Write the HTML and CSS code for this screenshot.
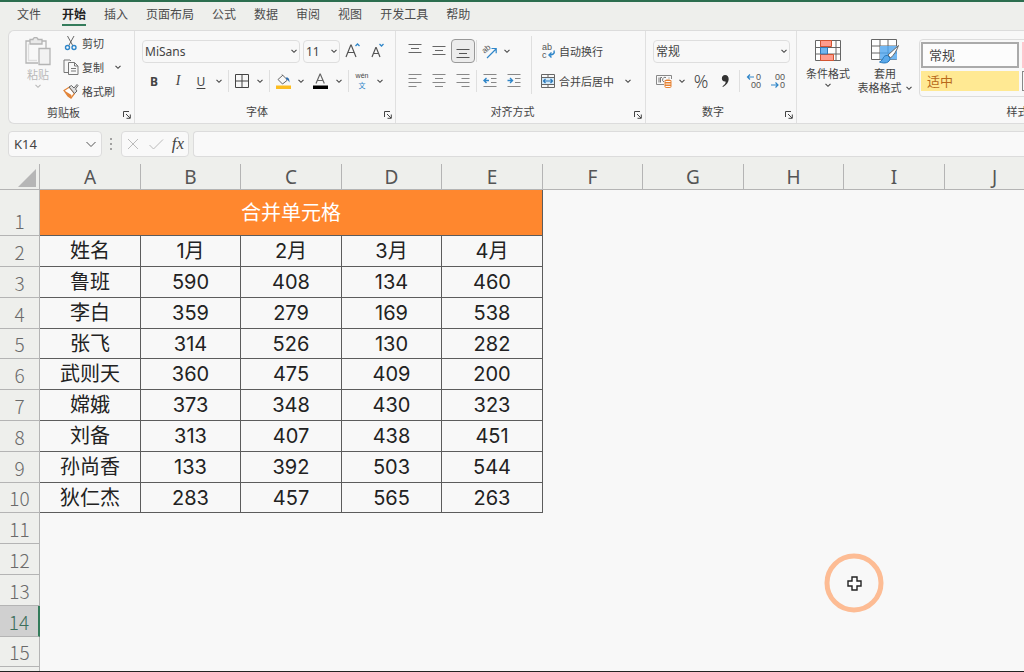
FILE: index.html
```html
<!DOCTYPE html>
<html lang="zh-CN">

<head>
    <meta charset="utf-8">
    <title>合并单元格</title>
    <link rel="stylesheet" href="styles.css">
</head>

<body>
    <svg class="symbols" aria-hidden="true">
        <symbol id="chevron" viewBox="0 0 8 8"><path d="M1.5 2.8 4 5.3 6.5 2.8" fill="none" stroke="currentColor" stroke-width="1.1"/></symbol>
        <symbol id="launcher" viewBox="0 0 8 8"><path d="M.5 6V.5H6M3 3l4 4M7.3 3.5v3.8H3.5" fill="none" stroke="currentColor"/></symbol>
    </svg>
    <nav class="tabs">
        <a href="#" class="file-tab">文件</a>
        <a href="#" class="active-tab">开始</a>
        <a href="#">插入</a>
        <a href="#">页面布局</a>
        <a href="#">公式</a>
        <a href="#">数据</a>
        <a href="#">审阅</a>
        <a href="#">视图</a>
        <a href="#">开发工具</a>
        <a href="#">帮助</a>
    </nav>

    <div class="ribbon">
        <section class="group clipboard">
            <div class="group-body">
                <button type="button" class="paste">
                    <svg width="28" height="29" viewBox="0 0 28 29" fill="none" stroke="#b4b4b4" stroke-width="1.3">
                        <path d="M6 4H2v22h12M18 4h4v7"/>
                        <path d="M6 2.5h3C9-.2 14-.2 14 2.5h4V7H6z" fill="#e9e9e9"/>
                        <path d="M4.500 6.500V23.500H13" stroke="#dedede"/>
                        <path d="M15 11.500h11v16H15z" fill="#f2f2f2"/>
                    </svg>
                    <span>粘贴</span>
                    <svg class="chev"><use href="#chevron"/></svg>
                </button>
                <div class="stack three">
                    <button type="button" class="text-tool">
                        <svg width="16" height="16" viewBox="0 0 16 16" fill="none" stroke="#666">
                            <path d="M4.500 1 10 11M11 1 5.500 11"/>
                            <circle cx="4.500" cy="12.500" r="2" stroke="#2f86c9" stroke-width="1.400"/><circle cx="11" cy="12.500" r="2" stroke="#2f86c9" stroke-width="1.400"/>
                        </svg>
                        剪切
                    </button>
                    <div class="row">
                        <button type="button" class="text-tool">
                            <svg width="16" height="16" viewBox="0 0 16 16" fill="none" stroke="#777">
                                <path d="M5 13.500H1V1h6l1 1M5.500 3.500h6l3.500 3.500v8.500H5.500zM11.500 3.500V7H15M8 9.500h5M8 12h5"/>
                            </svg>
                            复制
                        </button>
                        <button type="button" class="more copy-more" aria-label="复制选项"><svg class="chev"><use href="#chevron"/></svg></button>
                    </div>
                    <button type="button" class="text-tool">
                        <svg width="16" height="16" viewBox="0 0 16 16" fill="none">
                            <path d="M1 7.500 6.500 4l5 6.500L8 15 5 13z" fill="#fff" stroke="#e2853a" stroke-width="1.300"/>
                            <path d="m2 8 6.500 4L8 15l-3-2z" fill="#e2853a"/>
                            <path d="m6 4 2.500-1.500L11 5l3-3.500 1 1L12.500 6 14 8l-2.500 2.500z" fill="#ddd" stroke="#666"/>
                        </svg>
                        格式刷
                    </button>
                </div>
            </div>
            <div class="group-foot"><span>剪贴板</span><button type="button" class="launch" aria-label="剪贴板设置"><svg><use href="#launcher"/></svg></button></div>
        </section>

        <section class="group font-group">
            <div class="group-body">
                <div class="stack">
                    <div class="row">
                        <div class="combo font-name">
                            <select aria-label="字体"><option>MiSans</option></select>
                            <svg class="chev"><use href="#chevron"/></svg>
                        </div>
                        <div class="combo font-size">
                            <select aria-label="字号"><option>11</option></select>
                            <svg class="chev"><use href="#chevron"/></svg>
                        </div>
                        <button type="button" class="tool size-tool" aria-label="增大字号">
                            <svg width="18" height="18" viewBox="0 0 18 18" fill="none" stroke="#555"><path d="m2 15 4.800-12h.4L12 15M3.800 10.500h6.400" stroke-width="1.200"/><path d="m11.500 4 2-2 2 2" stroke="#2f86c9" stroke-width="1.300"/></svg>
                        </button>
                        <button type="button" class="tool size-tool" aria-label="减小字号">
                            <svg width="18" height="18" viewBox="0 0 18 18" fill="none" stroke="#555"><path d="m3 15 3.800-9.500h.4L11 15M4.500 11.500h5" stroke-width="1.200"/><path d="m10.500 2 2 2 2-2" stroke="#2f86c9" stroke-width="1.300"/></svg>
                        </button>
                    </div>
                    <div class="row">
                        <button type="button" class="tool bold">B</button>
                        <button type="button" class="tool italic">I</button>
                        <button type="button" class="tool split underline">U</button>
                        <button type="button" class="more" aria-label="下划线选项"><svg class="chev"><use href="#chevron"/></svg></button>
                        <span class="sep"></span>
                        <button type="button" class="tool split" aria-label="边框">
                            <svg width="16" height="16" viewBox="0 0 16 16" fill="none" stroke="#444"><path d="M1.500 1.500h13v13h-13zM8 1.500v13M1.500 8h13"/></svg>
                        </button>
                        <button type="button" class="more" aria-label="边框选项"><svg class="chev"><use href="#chevron"/></svg></button>
                        <span class="sep"></span>
                        <button type="button" class="tool split" aria-label="填充颜色">
                            <svg width="16" height="16" viewBox="0 0 16 16" fill="none"><path d="M7 1.500 12.500 7l-5 4L3 6.500l5-4.500" stroke="#666"/><path d="M11 4.500c3-.5 3.500 2 3.500 5-1-1-1-3-3.500-3z" fill="#2f6eaf"/><path fill="#fdbd20" d="M1 12.500h15V16H1z"/></svg>
                        </button>
                        <button type="button" class="more" aria-label="填充颜色选项"><svg class="chev"><use href="#chevron"/></svg></button>
                        <button type="button" class="tool" aria-label="字体颜色">
                            <svg width="16" height="16" viewBox="0 0 16 16" fill="none"><path d="m4 10.500 4-9.500h.3l4 9.500M5.500 7.500h5.300" stroke="#666" stroke-width="1.200"/><path fill="#000" d="M1 12.500h15V16H1z"/></svg>
                        </button>
                        <button type="button" class="more" aria-label="字体颜色选项"><svg class="chev"><use href="#chevron"/></svg></button>
                        <span class="sep"></span>
                        <button type="button" class="tool split phonetic"><span>wén</span><span class="phonetic-char">文</span></button>
                        <button type="button" class="more" aria-label="拼音选项"><svg class="chev"><use href="#chevron"/></svg></button>
                    </div>
                </div>
            </div>
            <div class="group-foot"><span>字体</span><button type="button" class="launch" aria-label="字体设置"><svg><use href="#launcher"/></svg></button></div>
        </section>

        <section class="group align-group">
            <div class="group-body">
                <div class="stack">
                    <div class="row">
                        <button type="button" class="tool" aria-label="顶端对齐"><svg width="14" height="14" viewBox="0 0 14 14" stroke="#666"><path d="M.5.5h13M3 4.500h8M.5 8.500h13"/></svg></button>
                        <button type="button" class="tool" aria-label="垂直居中"><svg width="14" height="14" viewBox="0 0 14 14" stroke="#666"><path d="M.5 2.500h13M3 6.500h8M.5 10.500h13"/></svg></button>
                        <button type="button" class="tool pressed" aria-label="底端对齐"><svg width="14" height="14" viewBox="0 0 14 14" stroke="#555"><path d="M.5 5.500h13M3 9.500h8M.5 13.500h13"/></svg></button>
                        <span class="sep"></span>
                        <button type="button" class="tool split" aria-label="方向">
                            <svg width="16" height="16" viewBox="0 0 16 16" fill="none"><text x="1" y="8" class="slant-text" transform="rotate(-40 6 6)">ab</text><path d="m6 15 9-9M10.500 5.500h4.700v4.700" stroke="#2f86c9" stroke-width="1.200"/></svg>
                        </button>
                        <button type="button" class="more" aria-label="方向选项"><svg class="chev"><use href="#chevron"/></svg></button>
                    </div>
                    <div class="row">
                        <button type="button" class="tool" aria-label="左对齐"><svg width="14" height="14" viewBox="0 0 14 14" stroke="#888"><path d="M.5.5h13M.5 4.500h8M.5 8.500h13M.5 12.500h8"/></svg></button>
                        <button type="button" class="tool" aria-label="居中"><svg width="14" height="14" viewBox="0 0 14 14" stroke="#888"><path d="M.5.5h13M3 4.500h8M.5 8.500h13M3 12.500h8"/></svg></button>
                        <button type="button" class="tool" aria-label="右对齐"><svg width="14" height="14" viewBox="0 0 14 14" stroke="#888"><path d="M.5.5h13M5.500 4.500h8M.5 8.500h13M5.500 12.500h8"/></svg></button>
                        <span class="sep"></span>
                        <button type="button" class="tool" aria-label="减少缩进"><svg width="14" height="14" viewBox="0 0 14 14" stroke="#888" fill="none"><path d="M.5.5h13M8 4.500h5.500M8 8.500h5.500M.5 12.500h13"/><path d="M6 6.500H1M3.500 4 1 6.500 3.500 9" stroke="#2f86c9" stroke-width="1.400"/></svg></button>
                        <button type="button" class="tool" aria-label="增加缩进"><svg width="14" height="14" viewBox="0 0 14 14" stroke="#888" fill="none"><path d="M.5.5h13M8 4.500h5.500M8 8.500h5.500M.5 12.500h13"/><path d="M.5 6.500h5M3 4l2.500 2.500L3 9" stroke="#2f86c9" stroke-width="1.400"/></svg></button>
                    </div>
                </div>
                <span class="sep tall"></span>
                <div class="stack">
                    <button type="button" class="text-tool">
                        <svg width="16" height="16" viewBox="0 0 16 16" fill="none"><text x="2" y="7" class="wrap-text">ab</text><text x="2" y="15" class="wrap-text">c</text><path d="M14 7.500c1 3-1 4.500-5 4.500M11.500 9.500 9 12l2.500 2.500" stroke="#2f86c9" stroke-width="1.400"/></svg>
                        自动换行
                    </button>
                    <div class="row">
                        <button type="button" class="text-tool">
                            <svg width="16" height="16" viewBox="0 0 16 16" fill="none"><path d="M1.500 1.500h13v13h-13z" stroke="#666"/><path d="M2 4.500h12v7H2z" fill="#d3e9f8"/><path d="M8 1.500V4M8 12v2.500M1.500 4.500h13M1.500 11.500h13" stroke="#666"/><path d="M3.500 8h9M5.500 6l-2 2 2 2M10.500 6l2 2-2 2" stroke="#2878bb" stroke-width="1.200"/></svg>
                            合并后居中
                        </button>
                        <button type="button" class="more merge-more" aria-label="合并选项"><svg class="chev"><use href="#chevron"/></svg></button>
                    </div>
                </div>
            </div>
            <div class="group-foot"><span>对齐方式</span><button type="button" class="launch" aria-label="对齐设置"><svg><use href="#launcher"/></svg></button></div>
        </section>

        <section class="group number-group">
            <div class="group-body">
                <div class="stack">
                    <div class="combo">
                        <select aria-label="数字格式"><option>常规</option></select>
                        <svg class="chev"><use href="#chevron"/></svg>
                    </div>
                    <div class="row">
                        <button type="button" class="tool split" aria-label="会计数字格式">
                            <svg width="16" height="16" viewBox="0 0 16 16" fill="none"><path d="M8 11.500H.5v-9h15V6" stroke="#888"/><path d="M3 4.500v5M6 4.500H4.500v5M10 4.500a2 2 0 0 0-2 4.500M13 4.500v1" stroke="#777"/><path d="M8.500 8c0-2 7-2 7 0v5.500c0 2-7 2-7 0z" fill="#e68132"/><path d="M9.500 8.500h5M9.500 11h5M9.500 13.500h5" stroke="#fff"/></svg>
                        </button>
                        <button type="button" class="more" aria-label="货币选项"><svg class="chev"><use href="#chevron"/></svg></button>
                        <button type="button" class="tool percent">%</button>
                        <button type="button" class="tool" aria-label="千位分隔样式"><svg width="12" height="14" viewBox="0 0 12 14"><path d="M6 1c5 0 5.500 8-2 12l-.6-.8C6 10.500 7 9 6.500 7.500 1.500 8 2 1 6 1z" fill="#333"/></svg></button>
                        <span class="sep"></span>
                        <button type="button" class="tool" aria-label="增加小数位数"><svg width="16" height="16" viewBox="0 0 16 16" fill="none"><path d="M8 4H1.500M4 1.500 1.500 4 4 6.500" stroke="#2f86c9" stroke-width="1.200"/><text x="10" y="7" class="digit-text">0</text><text x="5" y="15" class="digit-text">00</text></svg></button>
                        <button type="button" class="tool" aria-label="减少小数位数"><svg width="16" height="16" viewBox="0 0 16 16" fill="none"><path d="M1 12h7M5.500 9.500 8 12l-2.500 2.500" stroke="#2f86c9" stroke-width="1.200"/><text x="5" y="7" class="digit-text">00</text><text x="10" y="15" class="digit-text">0</text></svg></button>
                    </div>
                </div>
            </div>
            <div class="group-foot"><span>数字</span><button type="button" class="launch" aria-label="数字设置"><svg><use href="#launcher"/></svg></button></div>
        </section>

        <section class="group style-group">
            <div class="group-body">
                <button type="button" class="big-tool">
                    <svg width="28" height="24" viewBox="0 0 28 24" fill="none"><path d="M1.500 1.500h25v20h-25z" fill="#fff"/><path d="M1.500 1.500h25v20h-25zM1.500 8.500h25M1.500 15h25M6.500 1.500v20M22 1.500v20" stroke="#666"/><path d="M6.500 1.500h11v6h-11zM6.500 15.500h13v6h-13z" fill="#ff9c8d" stroke="#d35532"/><path d="M6.500 8.500h7V15h-7z" fill="#70b5ef" stroke="#3478b5"/></svg>
                    <span>条件格式</span>
                    <svg class="chev"><use href="#chevron"/></svg>
                </button>
                <button type="button" class="big-tool">
                    <svg width="30" height="26" viewBox="0 0 30 26" fill="none"><path d="M1.500 1.500h25v20h-25z" fill="#fff"/><path d="M1.500 1.500h25v20h-25zM1.500 8h25M1.500 15h25M10 1.500v20M18 1.500v20" stroke="#666"/><path d="M10 8h17v13.500H10z" fill="#72b7f2"/><path d="M10 15h17M18 8v13" stroke="#4d98d6"/><path d="M28.500 7.500 18 17l2.500 3C24 17 27 12 28.500 7.500z" fill="#fff" stroke="#666"/><path d="M17.500 17.500c-5-.5-3.500 4.500-8 6.500 5 2 10.500 1 10.500-4z" fill="#5aa9ea" stroke="#2878bb"/></svg>
                    <span>套用</span>
                    <span class="row">表格格式 <svg class="chev"><use href="#chevron"/></svg></span>
                </button>
                <div class="gallery">
                    <button type="button" class="swatch normal">常规</button>
                    <button type="button" class="swatch bad" aria-label="差"></button>
                    <button type="button" class="swatch neutral">适中</button>
                    <button type="button" class="swatch calc" aria-label="计算"></button>
                </div>
            </div>
            <div class="group-foot"><span>样式</span></div>
        </section>
    </div>

    <div class="formula-bar">
        <div class="combo name-box">
            <select aria-label="名称框"><option>K14</option></select>
            <svg width="12" height="12" viewBox="0 0 12 12" fill="none" stroke="#555"><path d="m1.500 4 4.500 4.500L10.500 4"/></svg>
        </div>
        <svg class="grip" width="4" height="16" viewBox="0 0 4 16" fill="#888"><circle cx="2" cy="3" r="1"/><circle cx="2" cy="8" r="1"/><circle cx="2" cy="13" r="1"/></svg>
        <div class="formula-actions">
            <button type="button" aria-label="取消"><svg width="14" height="14" viewBox="0 0 14 14" fill="none" stroke="#bbb"><path d="m2 2 10 10M12 2 2 12"/></svg></button>
            <button type="button" aria-label="输入"><svg width="16" height="14" viewBox="0 0 16 14" fill="none" stroke="#bbb"><path d="m1.500 8 4 4L15 2.500"/></svg></button>
            <button type="button" class="fx">fx</button>
        </div>
        <input type="text" class="formula-input" aria-label="编辑栏">
    </div>

    <main class="sheet">
        <table>
            <thead>
                <tr>
                    <th class="corner"><svg width="18" height="18" viewBox="0 0 18 18"><path d="M18 0v18H0z" fill="#b6b6b6"/></svg></th>
                    <th>A</th><th>B</th><th>C</th><th>D</th><th>E</th><th>F</th><th>G</th><th>H</th><th>I</th><th>J</th>
                </tr>
            </thead>
            <tbody>
                <tr class="title-row"><th>1</th><td colspan="5">合并单元格</td></tr>
                <tr><th>2</th><td>姓名</td><td>1月</td><td>2月</td><td>3月</td><td>4月</td></tr>
                <tr><th>3</th><td>鲁班</td><td>590</td><td>408</td><td>134</td><td>460</td></tr>
                <tr><th>4</th><td>李白</td><td>359</td><td>279</td><td>169</td><td>538</td></tr>
                <tr><th>5</th><td>张飞</td><td>314</td><td>526</td><td>130</td><td>282</td></tr>
                <tr><th>6</th><td>武则天</td><td>360</td><td>475</td><td>409</td><td>200</td></tr>
                <tr><th>7</th><td>嫦娥</td><td>373</td><td>348</td><td>430</td><td>323</td></tr>
                <tr><th>8</th><td>刘备</td><td>313</td><td>407</td><td>438</td><td>451</td></tr>
                <tr><th>9</th><td>孙尚香</td><td>133</td><td>392</td><td>503</td><td>544</td></tr>
                <tr><th>10</th><td>狄仁杰</td><td>283</td><td>457</td><td>565</td><td>263</td></tr>
                <tr><th>11</th></tr>
                <tr><th>12</th></tr>
                <tr><th>13</th></tr>
                <tr class="current-row"><th>14</th></tr>
                <tr><th>15</th></tr>
                <tr><th></th></tr>
            </tbody>
        </table>
    </main>

    <svg class="pointer" width="60" height="60" viewBox="0 0 60 60" fill="none">
        <circle cx="30" cy="30" r="27" stroke="#fdbc94" stroke-width="5"/>
        <path d="M28 24h5v4h4v5h-4v4h-5v-4h-4v-5h4z" fill="#fff" stroke="#222" stroke-width="1.400"/>
    </svg>
</body>

</html>
```

FILE: styles.css
```css
* {
    box-sizing: border-box;
}

body {
    display: flex;
    flex-direction: column;
    height: 100vh;
    margin: 0;
    overflow: hidden;
    position: relative;
    border-top: 2px solid #2c6e4f;
    border-bottom: 1px solid #222;
    background: #eeefec;
    color: #444;
    font: 11px "Noto Sans", "Noto Sans CJK SC", sans-serif;
}

button, select, input {
    margin: 0;
    padding: 0;
    border: none;
    background: none;
    color: inherit;
    font: inherit;
}

svg {
    display: block;
    flex: none;
}

.symbols {
    position: absolute;
    width: 0;
    height: 0;
}

.chev {
    width: 8px;
    height: 8px;
}

/* tabs */
.tabs {
    display: flex;
    flex: none;
    gap: 18px;
    height: 28px;
    padding: 2px 17px;
    font-size: 12px;
    line-height: 21px;
}

.tabs a {
    height: 22px;
    color: #4c4c4c;
    text-decoration: none;
    white-space: nowrap;
}

.tabs .file-tab {
    margin-right: 3px;
}

.tabs .active-tab {
    border-bottom: 2px solid #347c5b;
    color: #222;
    font-weight: bold;
}

/* ribbon */
.ribbon {
    display: flex;
    flex: none;
    height: 94px;
    margin-left: 8px;
    overflow: hidden;
    border: 1px solid #dcdcdc;
    border-right: none;
    border-radius: 6px 0 0 6px;
    background: #f8f8f8;
}

.group {
    display: flex;
    flex: none;
    flex-direction: column;
    justify-content: space-between;
    position: relative;
    padding: 5px 7px 2px;
    border-right: 1px solid #e0e0e0;
}

.clipboard {
    width: 126px;
    padding-top: 0;
}

.font-group {
    width: 261px;
}

.align-group {
    width: 250px;
}

.number-group {
    width: 151px;
}

.style-group {
    width: 444px;
    padding-left: 5px;
}

.group-body {
    display: flex;
}

.group-foot {
    display: flex;
    align-items: center;
    justify-content: center;
    height: 20px;
    padding-right: 16px;
}

.style-group .group-foot {
    padding-right: 0;
}

.launch {
    position: absolute;
    right: 3px;
    bottom: 4px;
}

.launch svg {
    width: 8px;
    height: 8px;
}

.stack {
    display: grid;
    grid-auto-rows: 30px;
    align-items: center;
}

.three {
    grid-auto-rows: 24px;
}

.row {
    display: flex;
    align-items: center;
}

.tool, .more {
    display: flex;
    align-items: center;
    justify-content: center;
    height: 24px;
    width: 24px;
}

.split {
    width: 22px;
}

.more {
    width: 14px;
}

.text-tool {
    display: flex;
    align-items: center;
    gap: 3px;
    padding-left: 4px;
    white-space: nowrap;
}

.clipboard .text-tool {
    padding-left: 3px;
}

.copy-more, .merge-more {
    margin-left: 7px;
}

.sep {
    width: 1px;
    height: 22px;
    margin: 0 2px;
    background: #dfdfdf;
}

.align-group .sep {
    margin: 0 1px;
}

.align-group .tall {
    height: 58px;
    margin: 0 4px 0 5px;
}

.pressed {
    border: 1px solid #999;
    border-radius: 4px;
    background: #ececec;
}

.paste {
    display: flex;
    flex-direction: column;
    align-items: center;
    width: 44px;
    padding-top: 6px;
    color: #b8b8b8;
}

.combo {
    display: grid;
    align-items: center;
    height: 23px;
    border: 1px solid #dedede;
    border-radius: 4px;
    font-size: 12px;
}

.combo select {
    grid-area: 1 / 1;
    width: 100%;
    padding-left: 2px;
    appearance: none;
}

.combo svg {
    grid-area: 1 / 1;
    justify-self: end;
    margin-right: 1px;
    pointer-events: none;
}

.font-name {
    width: 158px;
    margin-right: 3px;
}

.font-size {
    width: 37px;
}

.size-tool {
    margin-left: 1px;
}

.bold {
    font-size: 12px;
    font-weight: bold;
}

.italic {
    font-family: "Liberation Serif", serif;
    font-size: 14px;
    font-style: italic;
}

.underline {
    font-size: 12px;
    text-decoration: underline;
    text-underline-offset: 2px;
}

.phonetic {
    flex-direction: column;
    font-family: "Liberation Sans", "Noto Sans CJK SC", sans-serif;
    font-size: 7px;
    line-height: 10px;
}

.phonetic-char {
    color: #2f86c9;
}

.percent {
    font-size: 18px;
    font-weight: 300;
}

.slant-text, .wrap-text, .digit-text {
    fill: #555;
    font-family: "Liberation Sans", sans-serif;
    font-size: 9px;
}

.slant-text {
    font-size: 8px;
}

.big-tool {
    display: flex;
    flex-direction: column;
    align-items: center;
    width: 52px;
    padding-top: 2px;
    line-height: 14px;
    white-space: nowrap;
}

.big-tool > svg:first-child {
    height: 26px;
    margin-bottom: 3px;
}

.big-tool + .big-tool {
    width: 62px;
}

.big-tool .row {
    gap: 3px;
}

.gallery {
    display: grid;
    flex: 1;
    grid-template-columns: 98px 98px;
    grid-template-rows: 26px 20px;
    gap: 3px;
    height: 58px;
    margin: 3px 0 0 3px;
    padding: 2px 0 0 1px;
    border: 1px solid #ddd;
    border-radius: 4px;
}

.swatch {
    padding-left: 6px;
    font-size: 13px;
    line-height: 18px;
    text-align: left;
}

.normal {
    border: 2px solid #aaa;
    background: #fcfcfc;
}

.neutral {
    background: #ffe993;
    color: #b8691b;
}

.bad {
    background: #ffc7ce;
}

.calc {
    border: 1px solid #888;
}

/* formula bar */
.formula-bar {
    display: flex;
    flex: none;
    align-items: center;
    height: 40px;
    padding-left: 8px;
}

.name-box, .formula-actions, .formula-input {
    height: 26px;
    border: 1px solid #dcdcdc;
    border-radius: 4px;
    background: #f9f9f9;
}

.name-box {
    width: 94px;
    font-size: 13px;
}

.name-box select {
    padding-left: 5px;
}

.name-box svg {
    margin-right: 4px;
}

.grip {
    margin: 0 8px 0 7px;
}

.formula-actions {
    display: flex;
    align-items: center;
    justify-content: space-around;
    width: 68px;
    margin-right: 4px;
}

.fx {
    font-family: "Liberation Serif", serif;
    font-size: 17px;
    font-style: italic;
}

.formula-input {
    flex: 1;
    border-right: none;
    border-radius: 4px 0 0 4px;
}

/* sheet */
.sheet {
    flex: 1;
    overflow: hidden;
    background: #f8f8f8;
}

table {
    width: 1045px;
    border-spacing: 0;
    table-layout: fixed;
    font-family: Inter, "Noto Sans CJK SC", sans-serif;
    font-size: 20px;
    line-height: 24px;
}

th, td {
    padding: 0;
    border: solid #5c5c5c;
    border-width: 0 1px 1px 0;
    text-align: center;
}

td {
    color: #222;
    font-weight: 400;
}

th {
    border-color: #b4b4b4;
    background: #eeefec;
    font-weight: normal;
}

thead th {
    width: 100px;
    height: 26px;
    padding-top: 2px;
    color: #555;
    font-family: "Noto Sans", sans-serif;
    font-size: 19px;
    line-height: 23px;
}

thead th:nth-child(even) {
    width: 101px;
}

thead .corner {
    width: 40px;
}

.corner svg {
    margin-left: 18px;
}

tbody tr {
    height: 31px;
}

tbody tr:nth-child(5n) {
    height: 30px;
}

tbody th {
    padding-bottom: 2px;
    color: #6a6a6a;
    font-family: "Noto Sans CJK SC", sans-serif;
    font-size: 19px;
    font-weight: 300;
    vertical-align: bottom;
}

tbody .title-row {
    height: 46px;
}

.title-row td {
    background: #ff872e;
    color: #fff;
}

.current-row th {
    border-right: 2px solid #347c5b;
    background: #d0d0d0;
    color: #3d6f5c;
}

.pointer {
    position: absolute;
    top: 551px;
    left: 824px;
}
```
